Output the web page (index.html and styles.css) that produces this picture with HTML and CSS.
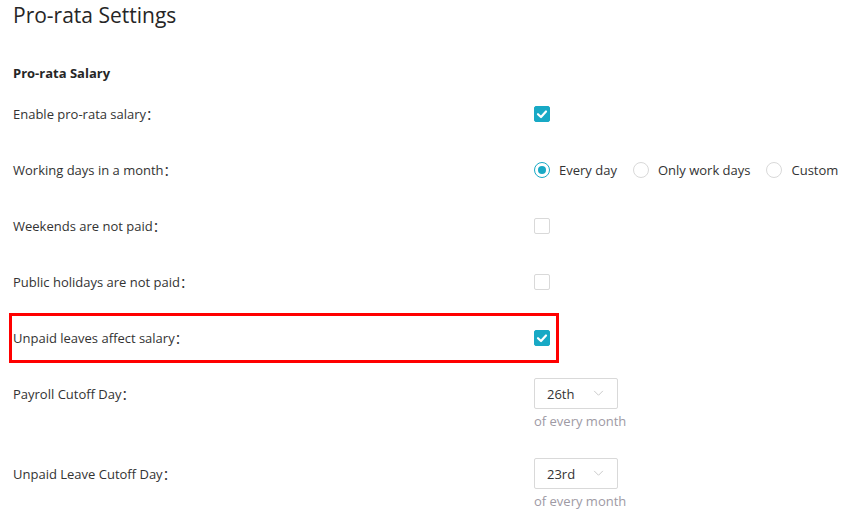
FILE: index.html
```html
<!DOCTYPE html>
<html>
<head>
<meta charset="utf-8">
<link rel="stylesheet" href="styles.css">
</head>
<body>
<div class="page">
  <h1 class="title">Pro-rata Settings</h1>
  <h2 class="section">Pro-rata Salary</h2>
  <div class="form">
    <div class="row">
      <div class="label">Enable pro-rata salary：</div>
      <div class="control"><span class="check on"><svg viewBox="0 0 16 16" width="16" height="16"><path d="M4 8.2 L7 11 L12 5.5" fill="none" stroke="#fff" stroke-width="2.2" stroke-linecap="round" stroke-linejoin="round"/></svg></span></div>
    </div>
    <div class="row">
      <div class="label">Working days in a month：</div>
      <div class="control radios">
        <span class="radio-item"><span class="radio on"></span>Every day</span>
        <span class="radio-item"><span class="radio"></span>Only work days</span>
        <span class="radio-item"><span class="radio"></span>Custom</span>
      </div>
    </div>
    <div class="row">
      <div class="label">Weekends are not paid：</div>
      <div class="control"><span class="check"></span></div>
    </div>
    <div class="row">
      <div class="label">Public holidays are not paid：</div>
      <div class="control"><span class="check"></span></div>
    </div>
    <div class="row marked">
      <span class="mark"></span>
      <div class="label">Unpaid leaves affect salary：</div>
      <div class="control"><span class="check on"><svg viewBox="0 0 16 16" width="16" height="16"><path d="M4 8.2 L7 11 L12 5.5" fill="none" stroke="#fff" stroke-width="2.2" stroke-linecap="round" stroke-linejoin="round"/></svg></span></div>
    </div>
    <div class="row">
      <div class="label">Payroll Cutoff Day：</div>
      <div class="control stack">
        <div class="select"><span>26th</span><svg viewBox="0 0 12 8" width="11" height="7"><path d="M1 1 L6 6 L11 1" fill="none" stroke="#c4c4c4" stroke-width="1"/></svg></div>
        <div class="hint">of every month</div>
      </div>
    </div>
    <div class="row">
      <div class="label">Unpaid Leave Cutoff Day：</div>
      <div class="control stack">
        <div class="select"><span>23rd</span><svg viewBox="0 0 12 8" width="11" height="7"><path d="M1 1 L6 6 L11 1" fill="none" stroke="#c4c4c4" stroke-width="1"/></svg></div>
        <div class="hint">of every month</div>
      </div>
    </div>
  </div>
</div>
</body>
</html>
```
FILE: styles.css
```css
html, body {
  margin: 0;
  padding: 0;
  background: #fff;
}
body {
  font-family: "Open Sans", "Noto Sans", "Noto Sans CJK SC", sans-serif;
  font-size: 13px;
  color: #333;
}
.page {
  padding: 1px 0 0 13px;
}
.title {
  margin: 0;
  font-size: 21px;
  font-weight: 400;
  line-height: 28px;
  color: #262626;
}
.section {
  margin: 34px 0 0 0;
  font-size: 13px;
  font-weight: 700;
  line-height: 20px;
  color: #262626;
}
.form {
  margin-top: 15px;
  display: flex;
  flex-direction: column;
  gap: 24px;
}
.row {
  position: relative;
  display: flex;
  align-items: flex-start;
  min-height: 32px;
}
.label {
  width: 521px;
  flex: none;
  line-height: 32px;
  white-space: nowrap;
  font-feature-settings: "halt";
}
.control {
  display: flex;
  align-items: center;
  min-height: 32px;
}
.check {
  width: 16px;
  height: 16px;
  box-sizing: border-box;
  border: 1px solid #d9d9d9;
  border-radius: 2px;
  background: #fff;
  display: inline-flex;
}
.check.on {
  background: #18a9c5;
  border-color: #18a9c5;
}
.check.on svg {
  margin: -1px;
}
.radios {
  gap: 16px;
}
.radio-item {
  display: inline-flex;
  align-items: center;
  gap: 9px;
}
.radio {
  width: 16px;
  height: 16px;
  box-sizing: border-box;
  border: 1px solid #d9d9d9;
  border-radius: 50%;
  display: inline-flex;
  align-items: center;
  justify-content: center;
}
.radio.on {
  border-color: #18a9c5;
}
.radio.on::after {
  content: "";
  width: 8px;
  height: 8px;
  border-radius: 50%;
  background: #18a9c5;
}
.stack {
  flex-direction: column;
  align-items: flex-start;
}
.select {
  width: 84px;
  height: 31px;
  box-sizing: border-box;
  border: 1px solid #d9d9d9;
  border-radius: 2px;
  display: flex;
  align-items: center;
  justify-content: space-between;
  padding: 0 13px 0 12px;
  color: #333;
}
.hint {
  margin-top: 0;
  line-height: 25px;
  color: #9e9aa4;
}
.mark {
  position: absolute;
  left: -4px;
  top: -9px;
  width: 550px;
  height: 50px;
  box-sizing: border-box;
  border: 3px solid #f00;
  pointer-events: none;
}
```
